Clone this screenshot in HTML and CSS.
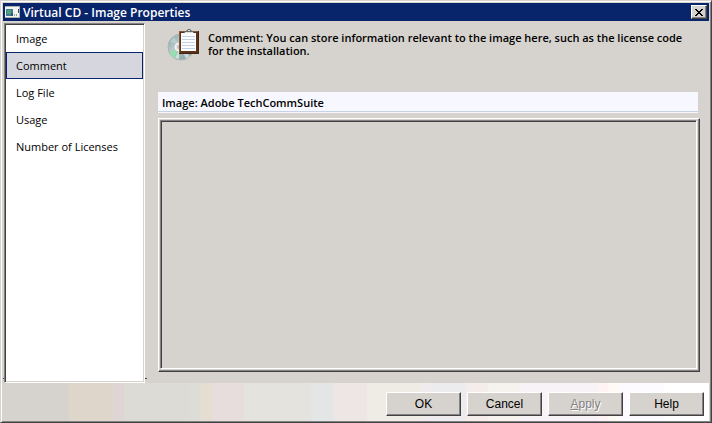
FILE: index.html
```html
<!DOCTYPE html>
<html lang="en">

<head>
    <meta charset="utf-8">
    <meta name="viewport" content="width=device-width, initial-scale=1">
    <title>Virtual CD - Image Properties</title>
    <link rel="stylesheet" href="styles.css">
</head>

<body>
    <div class="window">
        <header class="title-bar">
            <svg class="title-icon" width="16" height="16" viewBox="0 0 16 16" aria-hidden="true">
                <path fill="#f4f4f0" d="M1 2h15v12H1z" />
                <path fill="#a8b0b0" d="M1 2h15v1H1zM1 13h15v1H1zM15 3h1v10h-1z" />
                <path fill="#3d7f98" d="M2 5h7v7H2z" />
                <path fill="#56a070" d="M3 6h4v4H3z" />
                <path fill="#2e5878" d="M7 9h2v3H7z" />
                <path fill="#88a8a0" d="M10 10h1v2h-1zM12 10h1v2h-1z" />
                <path fill="#305060" d="M14 5h1v4h-1z" />
            </svg>
            <h1 class="title">Virtual CD - Image Properties</h1>
            <button class="close-button" type="button" aria-label="Close">
                <svg width="8" height="7" viewBox="0 0 8 7" shape-rendering="crispEdges" aria-hidden="true">
                    <path d="M0 0h2v1h1v1h2V1h1V0h2v1H7v1H6v1H5v1h1v1h1v1h1v1H6V6H5V5H3v1H2v1H0V6h1V5h1V4h1V3H2V2H1V1H0z" />
                </svg>
            </button>
        </header>

        <div class="body">
            <nav class="sidebar">
                <a class="nav-item" href="#image">Image</a>
                <a class="nav-item selected" href="#comment">Comment</a>
                <a class="nav-item" href="#log">Log File</a>
                <a class="nav-item" href="#usage">Usage</a>
                <a class="nav-item" href="#licenses">Number of Licenses</a>
            </nav>

            <main class="page">
                <div class="intro">
                    <svg class="intro-icon" width="34" height="34" viewBox="0 0 34 34" aria-hidden="true">
                        <defs>
                            <linearGradient id="disc" x1="0" y1="0" x2="1" y2="1">
                                <stop offset="0" stop-color="#8fa5a5" />
                                <stop offset=".4" stop-color="#b9caca" />
                                <stop offset=".65" stop-color="#9fb3b5" />
                                <stop offset="1" stop-color="#849a9c" />
                            </linearGradient>
                        </defs>
                        <circle cx="15" cy="18" r="13" fill="url(#disc)" stroke="#a9b4b4" />
                        <path d="M12 20 4 24a12 12 0 0 0 4 5z" fill="#91e5ac" />
                        <path d="M13 21 9 29l4 1z" fill="#c9e5dc" />
                        <path d="M12 15 4 13l4-5z" fill="#b8cecf" />
                        <path d="m16 21 8 6-4 3z" fill="#c8d8d6" />
                        <circle cx="13" cy="18" r="4" fill="#e7e7e5" stroke="#f7f7f7" />
                        <circle cx="13" cy="18" r="2" fill="#b8bfc0" />
                        <path fill="#402515" d="M13 2h20v23H13z" />
                        <path fill="#8b5631" d="M13 2h19v22H13z" />
                        <path fill="#5b3217" d="M14 3h18v21H14z" />
                        <path fill="#fdfdff" d="M15 4h15v18H15z" />
                        <path stroke="#c3d1e5" d="M16 7.500h13M16 10.500h13M16 13.500h13M16 16.500h13M16 19.500h13" />
                        <path fill="#656b6c" d="M18 2h2l2-2h2l2 2h2v2H18z" />
                        <path fill="#d9dedd" d="M19 3h8v1h-8zM22 1h2v1h-2z" />
                    </svg>
                    <p class="intro-text">Comment: You can store information relevant to the image here, such as the license code for the installation.</p>
                </div>
                <label class="section-title" for="comment">Image: Adobe TechCommSuite</label>
                <div class="comment-frame">
                    <textarea class="comment-box" id="comment"></textarea>
                </div>
            </main>
        </div>

        <footer class="footer">
            <button class="button" type="button">OK</button>
            <button class="button" type="button">Cancel</button>
            <button class="button" type="button" disabled><u>A</u>pply</button>
            <button class="button" type="button">Help</button>
        </footer>
    </div>
</body>

</html>
```
FILE: styles.css
```css
* {
    box-sizing: border-box;
}

body {
    margin: 0;
    background-color: #d6d3ce;
    color: #000;
    font-family: "Open Sans", "Noto Sans", sans-serif;
    font-size: 11px;
    line-height: 13px;
}

.window {
    display: flex;
    flex-direction: column;
    height: 100vh;
    padding: 1px 1px 0 0;
    border: 1px solid #d6d3ce;
    border-right-color: #424142;
    border-bottom-color: #424142;
    box-shadow: inset 1px 1px #fff, inset -1px -1px #848284;
}

.title-bar {
    display: flex;
    align-items: center;
    height: 18px;
    margin: 1px 1px 0 2px;
    padding: 0 2px 0 1px;
    background-color: #08246b;
    color: #fff;
}

.title {
    flex: 1;
    margin: 0 0 0 3px;
    font-size: 12px;
    font-weight: 600;
}

.close-button {
    display: flex;
    align-items: center;
    justify-content: center;
    width: 16px;
    height: 14px;
    padding: 0;
    border: 1px solid #fff;
    border-right-color: #424142;
    border-bottom-color: #424142;
    background-color: #d6d3ce;
    box-shadow: inset -1px -1px #848284;
}

.body {
    display: flex;
    flex: 1;
    min-height: 0;
    padding-left: 3px;
}

.sidebar {
    position: relative;
    width: 141px;
    margin-top: 2px;
    border: 1px solid #848284;
    border-right-color: #fff;
    border-bottom-color: #fff;
    background-color: #fff;
    box-shadow: inset 1px 1px #424142, inset -1px -1px #d6d3ce;
    padding: 1px;
}

/* groove line running behind the list */
.sidebar::before {
    content: "";
    position: absolute;
    z-index: -1;
    right: -3px;
    bottom: 3px;
    left: -2px;
    height: 1px;
    background-color: #424142;
}

.nav-item {
    display: block;
    height: 27px;
    padding: 6px 9px;
    border: 1px solid transparent;
    color: #000;
    text-decoration: none;
}

.nav-item.selected {
    border-color: #08246b;
    background-color: #d6d7de;
}

.page {
    display: flex;
    flex: 1;
    flex-direction: column;
    padding: 8px 10px 11px 13px;
}

.intro {
    display: flex;
    height: 63px;
    padding-left: 8px;
}

.intro-icon {
    flex: none;
}

.intro-text {
    max-width: 480px;
    margin: 2px 0 0 8px;
    font-weight: 600;
}

.section-title {
    height: 21px;
    margin-right: 2px;
    padding: 4px 4px 0;
    border-bottom: 1px solid #f7f7ff;
    background-color: #f7f7ff;
    box-shadow: inset 0 -1px #c6d3e7;
    font-weight: 600;
}

.comment-frame {
    display: flex;
    flex: 1;
    margin-top: 5px;
    padding: 1px;
    border: 1px solid #fff;
    border-right-color: #424142;
    border-bottom-color: #424142;
    box-shadow: inset -1px -1px #848284;
}

.comment-box {
    flex: 1;
    margin: 0 1px 1px 0;
    padding: 4px;
    border: 1px solid #848284;
    border-right-color: #fff;
    border-bottom-color: #fff;
    border-radius: 0;
    outline: none;
    background-color: #d6d3ce;
    box-shadow: inset 1px 1px #424142;
    font: inherit;
    resize: none;
}

.footer {
    display: flex;
    justify-content: flex-end;
    gap: 6px;
    height: 38px;
    margin: 0 1px 1px;
    padding: 9px 5px 5px 4px;
    background: linear-gradient(to right,
        #d6d3ce 67px, #ded5cb 67px 111px, #dfd5d5 111px 122px,
        #dddbd6 122px 188px, #dbddd6 188px 198px, #e5dcd2 198px 210px,
        #e6dddc 210px 242px, #e5e3de 242px 309px, #e4e5e5 309px 331px,
        #eee5e5 331px 365px, #efece6 365px 420px, #efebef 420px 430px,
        #ececef 430px 464px, #f5ecec 464px 486px, #f6f3ee 486px 518px,
        #f7f3f7 518px 596px, #fff3f3 596px 606px, #fffaf5 606px 618px,
        #fdfbff 618px 662px, #fff 662px);
}

.button {
    width: 75px;
    height: 24px;
    padding: 0;
    border: 1px solid #fff;
    border-right-color: #424142;
    border-bottom-color: #424142;
    background-color: #d6d3ce;
    box-shadow: inset -1px -1px #848284;
    color: #000;
    font-family: "Liberation Sans", Arial, sans-serif;
    font-size: 12px;
}

.button:disabled {
    color: #848284;
    text-shadow: 1px 1px #fff;
}
```
